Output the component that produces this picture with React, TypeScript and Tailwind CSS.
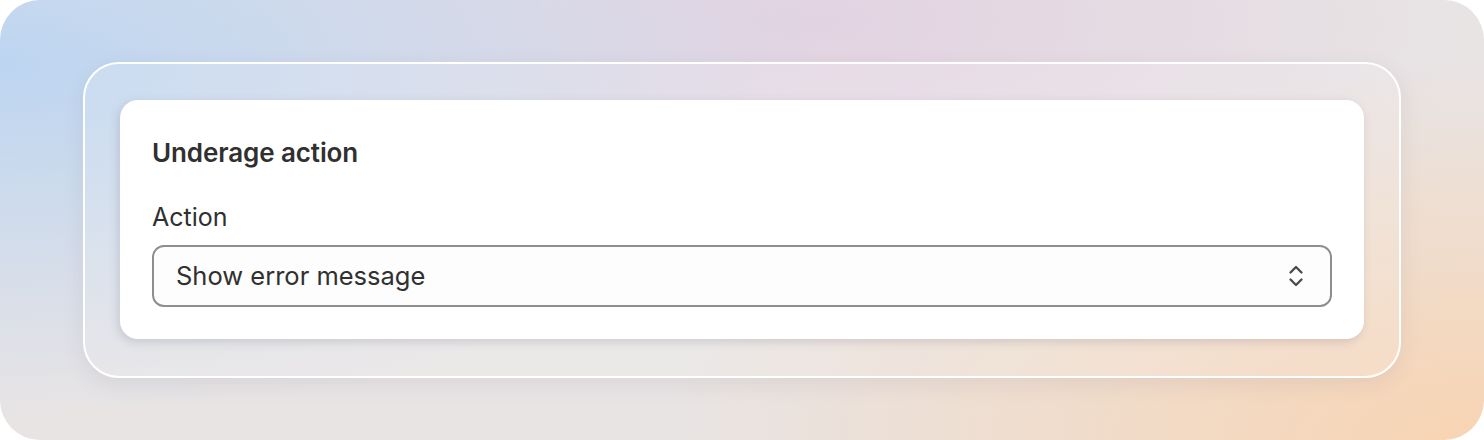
export default function App() {
  return (
    <div className="w-[1484px] h-[440px] bg-white">
      <div
        className="w-full h-full rounded-[40px] overflow-hidden px-[83px] py-[62px] bg-[radial-gradient(ellipse_55%_80%_at_0%_15%,#bdd5f1_0%,transparent_100%),radial-gradient(ellipse_45%_60%_at_55%_5%,#e2d3e2_0%,transparent_100%),radial-gradient(ellipse_55%_85%_at_100%_100%,#f8d4b2_0%,transparent_100%),linear-gradient(#e8e4e4,#e8e4e4)]"
        style={{ fontFamily: "Inter, 'Noto Sans', sans-serif" }}
      >
        {/* frame */}
        <div className="h-full rounded-[36px] border-2 border-white bg-white/15 px-[35px] py-[36px] shadow-[0_6px_20px_rgba(120,110,130,0.12)]">
          {/* card */}
          <div className="rounded-[18px] bg-white px-8 pt-[39px] pb-8 shadow-[-2px_3px_10px_rgba(90,90,110,0.2)]">
            <h2 className="text-[26px] leading-7 font-semibold text-[#303030] tracking-[-0.1px]">
              Underage action
            </h2>
            <div className="mt-[36px] text-[25px] leading-7 text-[#303030]">Action</div>
            <button className="mt-[14px] w-full h-[62px] flex items-center justify-between rounded-[12px] border-2 border-[#8e8e8e] bg-[#fdfdfd] pl-[22px] pr-[26px] text-left">
              <span className="text-[25.5px] leading-7 text-[#303030]">Show error message</span>
              <svg width="16" height="26" viewBox="0 0 16 26" fill="none" stroke="#4a4a4a" strokeWidth="2.3" strokeLinecap="round" strokeLinejoin="round">
                <path d="M2.5 9.5 8 4l5.5 5.5" />
                <path d="M2.5 16.5 8 22l5.5-5.5" />
              </svg>
            </button>
          </div>
        </div>
      </div>
    </div>
  );
}
